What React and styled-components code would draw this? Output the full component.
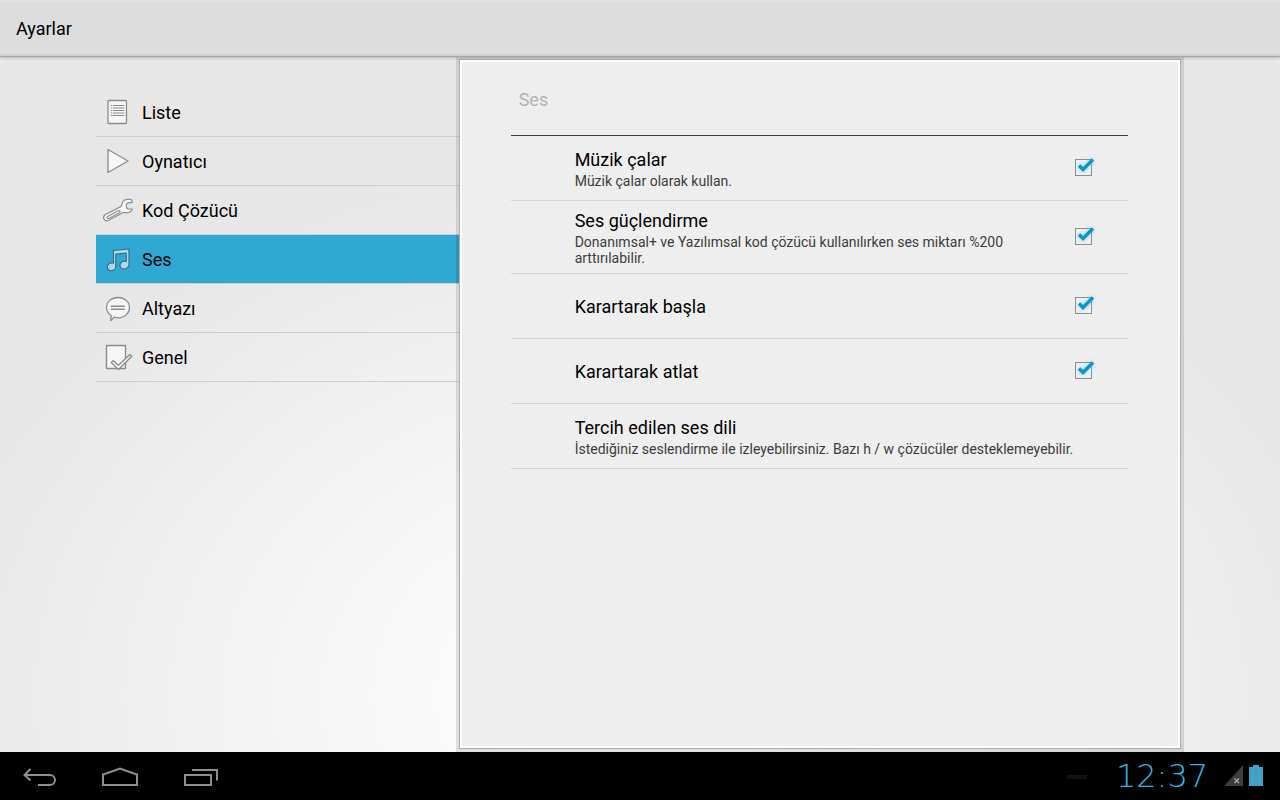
import React, { useState } from "react";
import styled, { createGlobalStyle } from "styled-components";

const GlobalStyle = createGlobalStyle`
  *, *::before, *::after { box-sizing: border-box; }
  body {
    margin: 0;
    font-family: Roboto, "Noto Sans", sans-serif;
    color: #000;
  }
  button { font: inherit; color: inherit; cursor: pointer; }
`;

const Screen = styled.div`
  display: flex;
  flex-direction: column;
  min-height: 100vh;
  background: radial-gradient(ellipse 58% 70% at 50% 87%, #ffffff 0%, #f8f8f8 35%, #f0f0f0 66%, #e9e9e9 90%, #e7e7e7 100%);
`;

const ActionBar = styled.header`
  position: relative;
  display: flex;
  align-items: center;
  height: 57px;
  padding: 2px 16px 0;
  background: #dddddd;
  border-bottom: 1px solid #a6a6a6;
  box-shadow: inset 0 -2px 0 #d2d2d2, inset 0 1px 0 #e2e2e2, 0 1px 3px rgba(0, 0, 0, 0.2);
`;

const AppTitle = styled.h1`
  margin: 0;
  font-size: 18px;
  line-height: 24px;
  font-weight: 400;
`;

const Body = styled.main`
  flex: 1;
  display: grid;
  grid-template-columns: 1fr 2fr;
  padding: 0 96px;
`;

const Sections = styled.nav`
  padding-top: 31px;
`;

const SectionButton = styled.button`
  display: flex;
  align-items: center;
  gap: 8px;
  width: 100%;
  height: 49px;
  padding: 0 6px;
  border: 0;
  border-bottom: 1px solid #cfcfcf;
  background: ${(p) => (p.$active ? "#2fa8d3" : "transparent")};
  text-align: left;
`;

const SectionName = styled.span`
  padding-top: 2px;
  font-size: 18px;
  line-height: 24px;
`;

const SectionIcon = styled.svg`
  flex: none;
  width: 32px;
  height: 32px;
  fill: ${(p) => (p.$active ? "#a9daeb" : "#f6f6f6")};
  stroke: ${(p) => (p.$active ? "#3b7187" : "#8c8c8c")};
  stroke-linejoin: round;
`;

const Panel = styled.section`
  margin: 2px 3px 3px 0;
  padding: 14px 50px 0 49px;
  border: 1px solid #aeaeae;
  background: #eeeeee;
  box-shadow: inset 0 0 0 2px #ffffff, 0 0 0 3px rgba(0, 0, 0, 0.11);
`;

const PanelInner = styled.div`
  padding: 0 2px;
`;

const PanelTitle = styled.h2`
  margin: 0;
  padding: 14px 8px 23px;
  border-bottom: 1px solid #3f3f3f;
  font-size: 18px;
  line-height: 24px;
  font-weight: 400;
  color: #b3b3b3;
`;

const Preference = styled.label`
  display: flex;
  align-items: center;
  gap: 24px;
  width: 100%;
  min-height: 65px;
  padding: 9px 36px 7px 64px;
  border: 0;
  border-bottom: 1px solid #d5d5d5;
  background: transparent;
  text-align: left;
  cursor: pointer;
`;

const PreferenceText = styled.span`
  flex: 1;
  display: flex;
  flex-direction: column;
  gap: 2px;
`;

const PreferenceName = styled.span`
  font-size: 18px;
  line-height: 22px;
`;

const PreferenceSummary = styled.span`
  font-size: 14px;
  line-height: 16px;
  color: #3c3c3c;
`;

const CheckSlot = styled.span`
  position: relative;
  flex: none;
  width: 17px;
  height: 17px;
  margin-bottom: 3px;
`;

const CheckBox = styled.input`
  appearance: none;
  display: block;
  width: 17px;
  height: 17px;
  margin: 0;
  border: 1px solid #8e8e8e;
  background: #f0f0f0;
`;

const CheckMark = styled.svg`
  position: absolute;
  left: 0;
  top: -4px;
  width: 24px;
  height: 24px;
  overflow: visible;
  pointer-events: none;
  fill: none;
  filter: drop-shadow(0 0 2px rgba(70, 190, 235, 0.6));
`;

const SystemBar = styled.footer`
  display: flex;
  justify-content: space-between;
  height: 48px;
  background: #000;
`;

const NavKeys = styled.div`
  display: flex;
`;

const NavKey = styled.button`
  width: 80px;
  height: 48px;
  padding: 0;
  border: 0;
  background: transparent;
`;

const NavIcon = styled.svg`
  display: block;
  width: 80px;
  height: 48px;
  fill: none;
  stroke: #8f8f8f;
  stroke-width: 2;
`;

const Status = styled.div`
  display: flex;
  align-items: center;
  padding-right: 16px;
`;

const Notification = styled.span`
  width: 20px;
  height: 4px;
  margin: 2px 24px 0 0;
  background: #121212;
`;

const Clock = styled.time`
  min-width: 102px;
  font-family: "DejaVu Sans Light", "DejaVu Sans ExtraLight", "DejaVu Sans", sans-serif;
  font-weight: 200;
  font-size: 32px;
  line-height: 48px;
  text-align: center;
  color: #33b5e5;
`;

const StatusIcons = styled.svg`
  width: 40px;
  height: 24px;
  margin-left: 11px;
`;

const icons = {
  list: (
    <>
      <rect x="6" y="4.5" width="18.5" height="23" rx="1" strokeWidth="1.3" />
      <path d="M8.7 9.5h1.6m.7 0h11.5M8.7 12h1.6m.7 0h11.5M8.7 14.5h1.6m.7 0h11.5M8.7 17h1.6m.7 0h11.5M8.7 19.5h1.6m.7 0h11.5" strokeWidth="1.2" />
    </>
  ),
  player: <path d="M6 4.5V27.5L26 16Z" strokeWidth="1.3" />,
  decoder: (
    <>
      <path d="M29.7 6C28 5.2 26 5 24.3 5.5C21.8 6.2 20 8.4 19.8 11.2L18.7 12.7L3.8 20.2C1.8 21.3 1.2 23.2 2 25C2.8 26.7 4.6 27.3 6.4 26.5L21.5 18.3C23.7 19 26.2 18.9 28 17.9C29.2 17.2 30 16.3 30.3 15L26 14.9C24.6 14 24 12.6 24.2 11.2C24.5 9.8 25.4 9 26.7 8.7L30 8.7Z" strokeWidth="1.2" />
      <path d="M5.6 22.4L16.2 16.7C18 16 19 17.800 17.400 18.700L6.800 24.400C5.200 25.200 4.200 23.300 5.600 22.400Z" strokeWidth="1.1" />
    </>
  ),
  audio: (
    <path d="M11.5 7.3L27 6V21.5C27 24 24.8 26 22.2 26C19.6 26 18 24.4 18 22.2C18 19.5 20.8 17.6 24.3 18.4V10.2L13.8 11.2V23.6C13.8 26 11.7 27.7 9.3 27.7C7 27.7 5.3 26.2 5.3 24C5.3 21.2 8 19.5 11.5 20.1Z" strokeWidth="1.2" />
  ),
  subtitle: (
    <>
      <path d="M16 5.5C22.5 5.5 27.5 9.8 27.5 15.6C27.5 21.4 22.5 25.8 16.5 25.8C14.8 25.8 13.5 25.6 12.3 25.2L8.7 28.6L9.2 23.7C6.2 21.8 4.5 19 4.5 15.6C4.5 9.8 9.5 5.5 16 5.5Z" strokeWidth="1.3" />
      <path d="M9 14.2H22.8M9 17.3H22.8" strokeWidth="1.5" />
    </>
  ),
  general: (
    <>
      <rect x="4.5" y="4.5" width="19" height="23" strokeWidth="1.4" />
      <path d="M9.3 21.5L11.2 19.7L16.3 24.3L28 13.4L29.8 15.2L16.5 28.5Z" strokeWidth="1.3" />
    </>
  ),
};

const sections = [
  { id: "list", name: "Liste" },
  { id: "player", name: "Oynatıcı" },
  { id: "decoder", name: "Kod Çözücü" },
  { id: "audio", name: "Ses" },
  { id: "subtitle", name: "Altyazı" },
  { id: "general", name: "Genel" },
];

const preferences = [
  { name: "Müzik çalar", summary: "Müzik çalar olarak kullan." },
  {
    name: "Ses güçlendirme",
    summary: "Donanımsal+ ve Yazılımsal kod çözücü kullanılırken ses miktarı %200 arttırılabilir.",
  },
  { name: "Karartarak başla" },
  { name: "Karartarak atlat" },
];

function PreferenceLabel({ name, summary }) {
  return (
    <PreferenceText>
      <PreferenceName>{name}</PreferenceName>
      {summary && <PreferenceSummary>{summary}</PreferenceSummary>}
    </PreferenceText>
  );
}

function CheckPreference({ name, summary }) {
  const [on, setOn] = useState(true);
  return (
    <Preference>
      <PreferenceLabel name={name} summary={summary} />
      <CheckSlot>
        <CheckBox type="checkbox" checked={on} onChange={() => setOn(!on)} />
        {on && (
          <CheckMark viewBox="0 0 24 24" aria-hidden="true">
            <path d="M4 10.5L8 14.5L18 4.5" stroke="#0a96c8" strokeWidth="3.4" />
          </CheckMark>
        )}
      </CheckSlot>
    </Preference>
  );
}

export default function App() {
  const [active, setActive] = useState("audio");
  return (
    <Screen>
      <GlobalStyle />
      <ActionBar>
        <AppTitle>Ayarlar</AppTitle>
      </ActionBar>
      <Body>
        <Sections aria-label="Ayarlar">
          {sections.map(({ id, name }) => (
            <SectionButton key={id} type="button" $active={id === active} onClick={() => setActive(id)}>
              <SectionIcon $active={id === active} viewBox="0 0 32 32" aria-hidden="true">
                {icons[id]}
              </SectionIcon>
              <SectionName>{name}</SectionName>
            </SectionButton>
          ))}
        </Sections>
        <Panel>
          <PanelInner>
            <PanelTitle>Ses</PanelTitle>
            {preferences.map((p) => (
              <CheckPreference key={p.name} {...p} />
            ))}
            <Preference as="button" type="button">
              <PreferenceLabel
                name="Tercih edilen ses dili"
                summary="İstediğiniz seslendirme ile izleyebilirsiniz. Bazı h / w çözücüler desteklemeyebilir."
              />
            </Preference>
          </PanelInner>
        </Panel>
      </Body>
      <SystemBar>
        <NavKeys>
          <NavKey type="button" aria-label="Geri">
            <NavIcon viewBox="0 0 80 48">
              <path d="M24.5 23H50A5 5 0 0 1 50 33H38M30.5 17L24.5 23L30.5 28.5" />
            </NavIcon>
          </NavKey>
          <NavKey type="button" aria-label="Ana ekran">
            <NavIcon viewBox="0 0 80 48">
              <path d="M23 22.5L40 16.5L57 22.5V33H23Z" />
            </NavIcon>
          </NavKey>
          <NavKey type="button" aria-label="Son uygulamalar">
            <NavIcon viewBox="0 0 80 48">
              <path d="M25 23H51V33H25ZM32 18H57V28.5" />
            </NavIcon>
          </NavKey>
        </NavKeys>
        <Status>
          <Notification />
          <Clock>12:37</Clock>
          <StatusIcons viewBox="0 0 40 24" aria-hidden="true">
            <path d="M19 1V22H0Z" fill="#3d3d3d" />
            <path d="M10.5 14.5L15 19M15 14.5L10.5 19" stroke="#b0b0b0" strokeWidth="1.2" />
            <path d="M25 3H29V1H35V3H39V22H25Z" fill="#429fc6" />
          </StatusIcons>
        </Status>
      </SystemBar>
    </Screen>
  );
}
